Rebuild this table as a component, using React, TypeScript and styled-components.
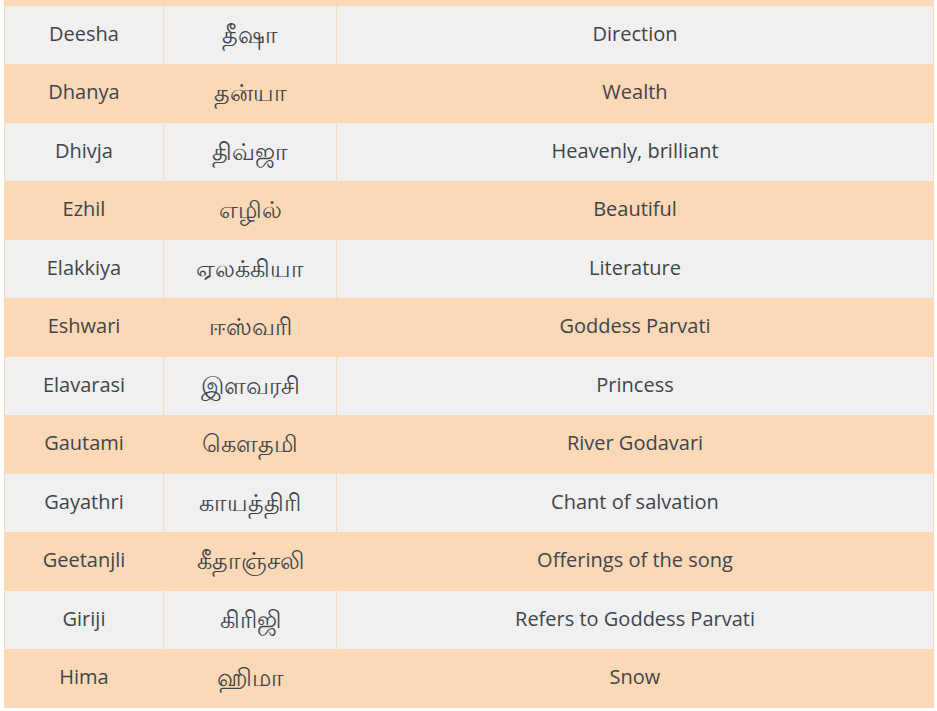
import React from "react";
import styled, { createGlobalStyle } from "styled-components";

const GlobalStyle = createGlobalStyle`
  html, body { margin: 0; padding: 0; background: #ffffff; }
  body { font-family: "Open Sans", "Noto Sans", sans-serif; }
`;

const PEACH = "#fbd9b7";
const GREY = "#f0f0f0";

const Page = styled.div`
  padding: 0 3px 0 4px;
`;

const Table = styled.table`
  width: 930px;
  border-collapse: collapse;
  table-layout: fixed;
  font-family: "Open Sans", "Noto Sans", sans-serif;
  font-size: 20px;
  color: #3f444a;
`;

const Row = styled.tr<{ $alt: boolean }>`
  background: ${(p) => (p.$alt ? PEACH : GREY)};
`;

const CutRow = styled.tr`
  background: ${PEACH};
  height: 5px;
`;

const Cell = styled.td<{ $tamil?: boolean }>`
  border: 1px solid ${PEACH};
  text-align: center;
  vertical-align: middle;
  height: 58.5px;
  padding: 0 8px 2px;
  box-sizing: border-box;
  line-height: 26px;
  font-size: ${(p) => (p.$tamil ? "24px" : "20px")};
`;

const CutCell = styled.td`
  border: 1px solid ${PEACH};
  border-top: none;
  padding: 0;
  height: 5px;
`;

const rows: [string, string, string][] = [
  ["Deesha", "தீஷா", "Direction"],
  ["Dhanya", "தன்யா", "Wealth"],
  ["Dhivja", "திவ்ஜா", "Heavenly, brilliant"],
  ["Ezhil", "எழில்", "Beautiful"],
  ["Elakkiya", "ஏலக்கியா", "Literature"],
  ["Eshwari", "ஈஸ்வரி", "Goddess Parvati"],
  ["Elavarasi", "இளவரசி", "Princess"],
  ["Gautami", "கௌதமி", "River Godavari"],
  ["Gayathri", "காயத்திரி", "Chant of salvation"],
  ["Geetanjli", "கீதாஞ்சலி", "Offerings of the song"],
  ["Giriji", "கிரிஜி", "Refers to Goddess Parvati"],
  ["Hima", "ஹிமா", "Snow"],
];

export default function App() {
  return (
    <>
      <GlobalStyle />
      <Page>
        <Table>
          <colgroup>
            <col style={{ width: 159 }} />
            <col style={{ width: 173 }} />
            <col />
          </colgroup>
          <tbody>
            <CutRow>
              <CutCell />
              <CutCell />
              <CutCell />
            </CutRow>
            {rows.map(([en, ta, meaning], i) => (
              <Row key={en} $alt={i % 2 === 1}>
                <Cell>{en}</Cell>
                <Cell $tamil>{ta}</Cell>
                <Cell>{meaning}</Cell>
              </Row>
            ))}
          </tbody>
        </Table>
      </Page>
    </>
  );
}
